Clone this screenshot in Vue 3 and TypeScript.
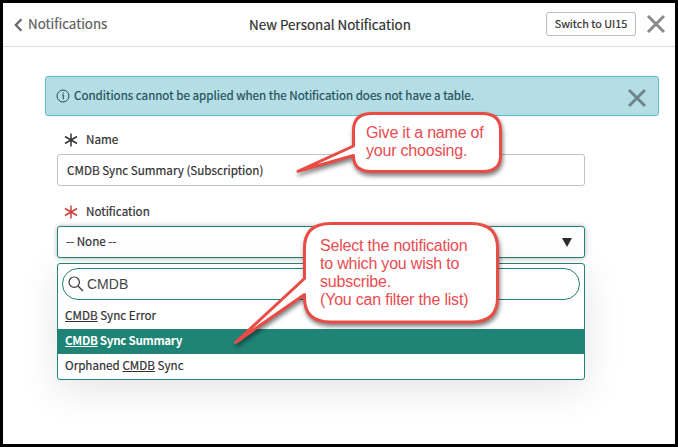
<script setup lang="ts">
import { ref } from 'vue'

interface Option {
  before: string
  match: string
  after: string
  active?: boolean
}

const name = ref('CMDB Sync Summary (Subscription)')
const filter = ref('CMDB')
const options: Option[] = [
  { before: '', match: 'CMDB', after: ' Sync Error' },
  { before: '', match: 'CMDB', after: ' Sync Summary', active: true },
  { before: 'Orphaned ', match: 'CMDB', after: ' Sync' },
]
</script>

<template>
  <div class="window">
    <header class="header">
      <div class="back">
        <svg class="chevron" viewBox="0 0 9 14"><path d="M7.4 1.2 1.8 7l5.6 5.8" /></svg>
        <span class="back-text">Notifications</span>
      </div>
      <h1 class="title">New Personal Notification</h1>
      <div class="actions">
        <button class="switch">Switch to UI15</button>
        <svg class="close" viewBox="0 0 20 20"><path d="M2 2 18 18M18 2 2 18" /></svg>
      </div>
    </header>

    <main class="content">
      <div class="alert">
        <svg class="info" viewBox="0 0 14 14">
          <circle cx="7" cy="7" r="6" />
          <path d="M6 5.9H7.300V10.300M7.200 3.300v1.300" />
        </svg>
        <span class="alert-text">Conditions cannot be applied when the Notification does not have a table.</span>
        <svg class="close alert-close" viewBox="0 0 20 20"><path d="M2 2 18 18M18 2 2 18" /></svg>
      </div>

      <div class="form">
        <div class="label">
          <svg class="star" viewBox="0 0 14 14"><path d="M7 .6v12.8M1 3.5l12 7M13 3.5l-12 7" /></svg>
          <span class="label-text">Name</span>
        </div>
        <div class="field"><span class="name-text">{{ name }}</span></div>

        <div class="label second">
          <svg class="star required" viewBox="0 0 14 14"><path d="M7 .6v12.8M1 3.5l12 7M13 3.5l-12 7" /></svg>
          <span class="label-text">Notification</span>
        </div>
        <div class="field select">
          <span class="select-text">-- None --</span>
          <svg class="caret" viewBox="0 0 10 9"><path d="M0 0h10L5 9z" /></svg>
        </div>

        <div class="dropdown">
          <div class="search">
            <svg class="glass" viewBox="0 0 16 16"><circle cx="6.2" cy="6.2" r="5.2" /><path d="m10 10 5 5" /></svg>
            <span>{{ filter }}</span>
          </div>
          <div v-for="(o, i) in options" :key="i" class="option" :class="{ active: o.active }">
            <span>{{ o.before }}<span class="match">{{ o.match }}</span>{{ o.after }}</span>
          </div>
        </div>
      </div>
    </main>

    <div class="callout name-callout">
      <svg class="bubble" viewBox="0 0 220 80">
        <path d="M92 11.500H202Q220.500 11.500 220.500 28.500V54Q220.500 69.500 202 69.500H92Q73.500 69.500 73.500 54V53.500L18 69.300L73.500 44V28.500Q73.500 11.500 92 11.500Z" />
      </svg>
      <p class="callout-text">Give it a name of<br />your choosing.</p>
    </div>
    <div class="callout select-callout">
      <svg class="bubble" viewBox="0 0 290 140">
        <path d="M101 9.500H241Q267.500 9.500 267.500 34V84Q267.500 108 241 108H101Q74.500 108 74.500 84V80.500L5.500 128.500L74.500 64.500V34Q74.500 9.500 101 9.500Z" />
      </svg>
      <p class="callout-text">Select the notification<br />to which you wish to<br />subscribe.<br />(You can filter the list)</p>
    </div>
  </div>
</template>

<style>
body {
  margin: 0;
}
</style>

<style scoped>
.window {
  position: relative;
  box-sizing: border-box;
  width: 678px;
  height: 447px;
  overflow: hidden;
  border: 3px solid #000;
  background: #fff;
  color: #303030;
  font: 11.650px/18px "Noto Sans CJK JP", "Noto Sans", sans-serif;
  -webkit-text-stroke: 0.200px currentColor;
}
svg {
  display: block;
  flex: none;
  overflow: visible;
  fill: none;
}
.header {
  display: grid;
  grid-template-columns: 1fr auto 1fr;
  align-items: center;
  box-sizing: border-box;
  height: 44px;
  padding: 0 9px 0 11px;
  border-bottom: 1px solid #dcdcdc;
}
.back {
  display: flex;
  align-items: center;
  gap: 5px;
  color: #606060;
  font-size: 13.350px;
}
.back-text {
  padding-bottom: 1px;
}
.chevron {
  width: 9px;
  height: 14px;
  stroke: #666;
  stroke-width: 2.300;
}
.title {
  margin: 0;
  padding: 0 20px 2px 0;
  font-size: 13.400px;
  font-weight: 400;
}
.actions {
  display: flex;
  justify-content: flex-end;
  align-items: center;
  gap: 10px;
}
.switch {
  box-sizing: border-box;
  width: 90px;
  height: 24px;
  margin-bottom: 1px;
  padding: 0 0 2px;
  border: 1px solid #bdbdbd;
  border-radius: 3px;
  background: #fff;
  color: #303030;
  font: 10.850px/20px "Noto Sans CJK JP", "Noto Sans", sans-serif;
  -webkit-text-stroke: 0.200px currentColor;
  white-space: nowrap;
}
.close {
  width: 20px;
  height: 20px;
  margin-bottom: 2px;
  stroke: #8a8a8a;
  stroke-width: 3;
}
.content {
  padding: 29px 16px 0 42px;
}
.alert {
  display: flex;
  align-items: center;
  box-sizing: border-box;
  height: 40px;
  padding: 0 11px 0 10px;
  border: 1px solid #62bccb;
  border-radius: 3px;
  background: #b4dde5;
  color: #1f4f59;
}
.info {
  width: 14px;
  height: 14px;
  margin-right: 4px;
  stroke: #1f4f59;
  stroke-width: 1;
}
.alert-text {
  flex: 1;
  padding-bottom: 2px;
  white-space: nowrap;
}
.alert-close {
  margin: 3px 0 0;
  stroke: #6f8588;
}
.form {
  width: 528px;
  margin-left: 12px;
}
.label {
  display: flex;
  align-items: center;
  gap: 8px;
  height: 18px;
  margin-top: 15px;
  margin-bottom: 5px;
  padding-left: 7px;
}
.label-text {
  padding-bottom: 2px;
}
.second {
  margin-top: 17px;
}
.star {
  width: 14px;
  height: 14px;
  stroke: #343434;
  stroke-width: 1.500;
}
.required {
  stroke: #d03f3f;
}
.field {
  display: flex;
  align-items: center;
  justify-content: space-between;
  box-sizing: border-box;
  height: 32px;
  padding: 0 12px 0 9px;
  border: 1px solid #c2c2c2;
  border-radius: 3px;
}
.select {
  border-color: #1f8476;
  padding-left: 8px;
  box-shadow: 0 0 5px rgba(0, 0, 0, 0.3);
  background: #fff;
}
.select-text {
  padding-bottom: 2px;
}
.caret {
  width: 10px;
  height: 9px;
  fill: #2b2b2b;
}
.dropdown {
  box-sizing: border-box;
  height: 117px;
  margin-top: 5px;
  padding: 4px 0 0;
  border: 1px solid #1f8476;
  border-radius: 3px;
  background: #fff;
  box-shadow: 0 10px 40px rgba(0, 0, 0, 0.110);
}
.search {
  display: flex;
  align-items: center;
  gap: 3px;
  box-sizing: border-box;
  height: 32px;
  margin: 0 4px 4px;
  padding-left: 5px;
  border: 1px solid #1f8476;
  border-radius: 16px;
  color: #444;
  font: 14px/18px "Liberation Sans", sans-serif;
  -webkit-text-stroke: 0;
}
.glass {
  width: 16px;
  height: 16px;
  stroke: #343434;
  stroke-width: 1.200;
}
.option {
  display: flex;
  align-items: center;
  box-sizing: border-box;
  height: 25px;
  padding: 0 0 3px 7px;
}
.option > span {
  white-space: pre;
}
.active {
  background: #1f8476;
  color: #fff;
  font-weight: 700;
  letter-spacing: -0.320px;
  -webkit-text-stroke: 0;
}
.match {
  text-decoration: underline;
}
.callout {
  position: absolute;
}
.name-callout {
  left: 277px;
  top: 99px;
}
.select-callout {
  left: 227px;
  top: 211px;
}
.bubble {
  fill: #fff;
  stroke: #ea4b45;
  stroke-width: 3;
  stroke-linejoin: round;
  filter: drop-shadow(1px 3px 2px rgba(0, 0, 0, 0.5));
}
.name-callout .bubble {
  width: 220px;
  height: 80px;
}
.select-callout .bubble {
  width: 290px;
  height: 140px;
}
.callout-text {
  position: absolute;
  margin: 0;
  color: #ea4b50;
  font: 16px/18px "Liberation Sans", sans-serif;
  letter-spacing: -0.2px;
  -webkit-text-stroke: 0;
  white-space: nowrap;
}
.name-callout .callout-text {
  left: 86px;
  top: 22px;
}
.select-callout .callout-text {
  left: 90px;
  top: 23px;
}
</style>
